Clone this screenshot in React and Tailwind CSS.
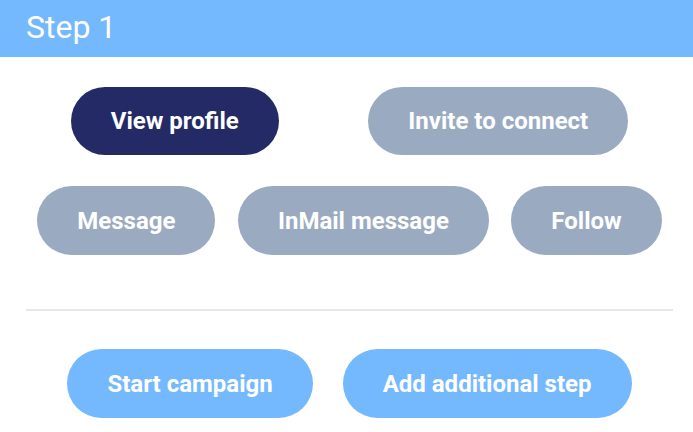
const pill = 'h-[68px] px-10 rounded-full text-white font-bold text-[24px] flex items-center justify-center whitespace-nowrap';

export default function App() {
  return (
    <div className="w-[693px] h-[432px] bg-white overflow-hidden" style={{ fontFamily: 'Roboto, "Liberation Sans", sans-serif' }}>
      {/* Header */}
      <div className="h-[57px] bg-[#74b8fe] flex items-center px-[26px] pb-[3px]">
        <h1 className="text-white text-[32px] leading-none font-normal">Step 1</h1>
      </div>

      <div className="pl-[26px] pr-[20px]">
        <div className="pt-[30px] flex justify-around">
          <button className={`${pill} bg-[#232a66]`}>View profile</button>
          <button className={`${pill} bg-[#9aabc1]`}>Invite to connect</button>
        </div>

        <div className="mt-[31px] flex justify-around">
          <button className={`${pill} h-[69px] bg-[#9aabc1]`}>Message</button>
          <button className={`${pill} h-[69px] bg-[#9aabc1]`}>InMail message</button>
          <button className={`${pill} h-[69px] bg-[#9aabc1]`}>Follow</button>
        </div>

        <div className="mt-[54px] h-[2px] bg-[#e8e8e8]" />

        <div className="mt-[38px] flex justify-center gap-[30px]">
          <button className={`${pill} h-[69px] bg-[#74b8fe]`}>Start campaign</button>
          <button className={`${pill} h-[69px] bg-[#74b8fe]`}>Add additional step</button>
        </div>
      </div>
    </div>
  );
}
